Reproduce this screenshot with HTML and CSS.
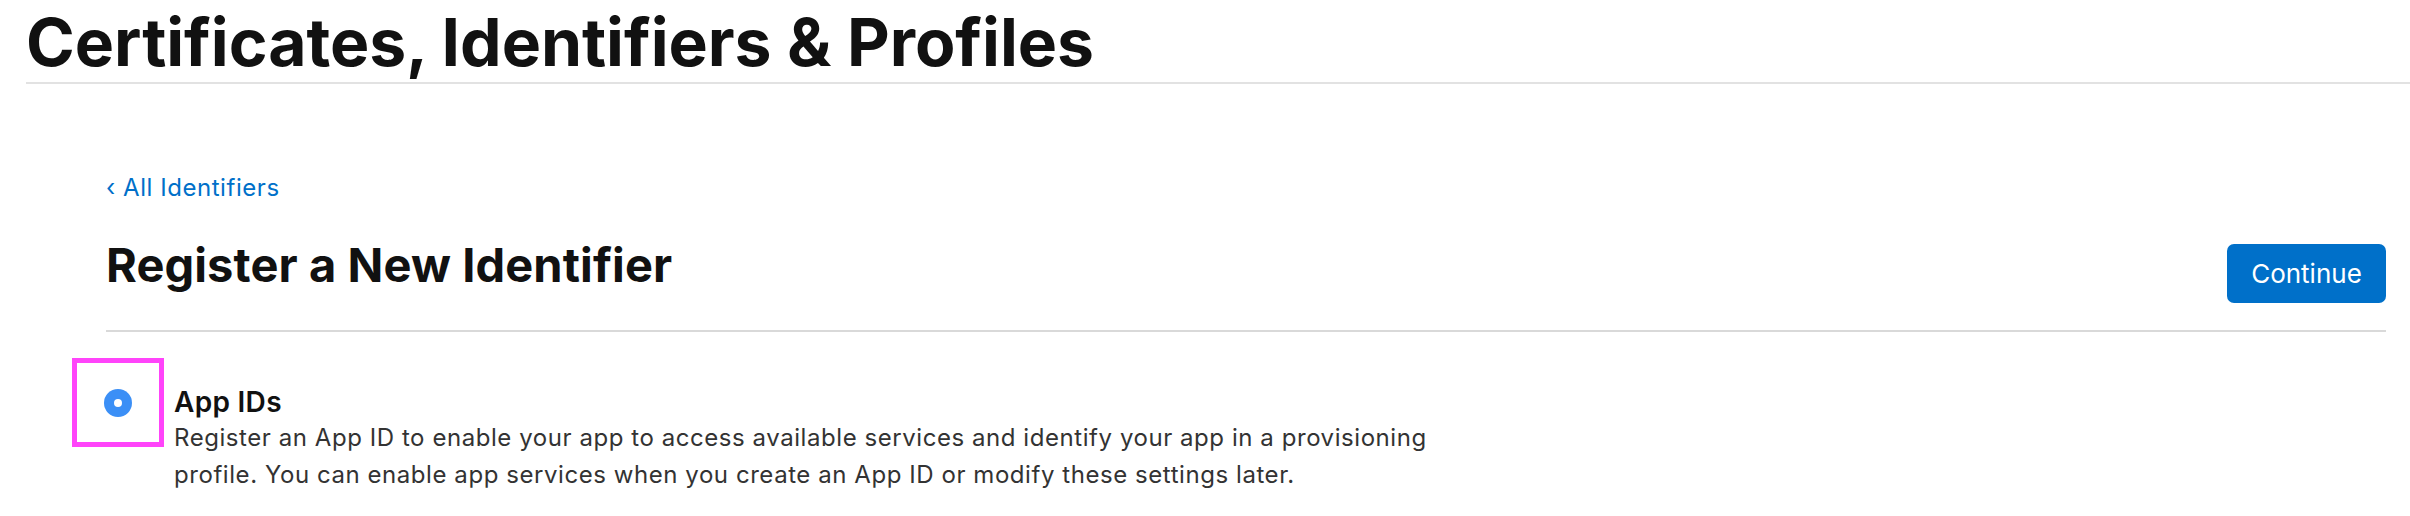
FILE: index.html
```html
<!DOCTYPE html>
<html lang="en">
<head>
<meta charset="utf-8">
<title>Certificates, Identifiers &amp; Profiles</title>
<link rel="stylesheet" href="styles.css">
</head>
<body>
<header class="top">
  <h1 class="top-title">Certificates, Identifiers &amp; Profiles</h1>
</header>
<main class="content">
  <a class="back" href="#">&lsaquo; All Identifiers</a>
  <div class="head-row">
    <h2 class="head-title">Register a New Identifier</h2>
    <button class="btn" type="button">Continue</button>
  </div>
  <div class="option">
    <span class="highlight"><span class="radio"></span></span>
    <div class="opt-text">
      <div class="opt-title">App IDs</div>
      <p class="opt-desc">Register an App ID to enable your app to access available services and identify your app in a provisioning profile. You can enable app services when you create an App ID or modify these settings later.</p>
    </div>
  </div>
</main>
</body>
</html>
```

FILE: styles.css
```css
html, body {
  margin: 0;
  padding: 0;
  background: #ffffff;
}
body {
  font-family: Inter, "Noto Sans", "Liberation Sans", sans-serif;
  color: #111111;
}
.top {
  margin-left: 26px;
  padding-top: 3px;
  border-bottom: 2px solid #e2e2e2;
}
.top-title {
  margin: 0;
  font-size: 66px;
  line-height: 79px;
  font-weight: 700;
  letter-spacing: -0.05px;
  color: #111111;
}
.content {
  padding: 89px 24px 0 106px;
}
.back {
  display: block;
  font-size: 24px;
  line-height: 30px;
  letter-spacing: 0.55px;
  color: #0070c9;
  text-decoration: none;
}
.head-row {
  display: flex;
  justify-content: space-between;
  align-items: flex-start;
  margin-top: 34px;
  padding-bottom: 27px;
  border-bottom: 2px solid #d9d9d9;
}
.head-title {
  margin: 0;
  font-size: 47px;
  line-height: 56px;
  font-weight: 700;
  letter-spacing: 0.1px;
  color: #111111;
}
.btn {
  margin-top: 7px;
  width: 159px;
  height: 59px;
  border: 0;
  border-radius: 7px;
  background: #0070c9;
  color: #ffffff;
  font-family: inherit;
  font-size: 26px;
  padding: 0;
}
.option {
  display: flex;
  align-items: flex-start;
  gap: 10px;
  margin-left: -34px;
  margin-top: 26px;
}
.highlight {
  box-sizing: border-box;
  width: 92px;
  height: 89px;
  border: 5px solid #ff44fa;
  display: flex;
  align-items: center;
  justify-content: center;
  flex: none;
}
.radio {
  box-sizing: border-box;
  width: 28px;
  height: 28px;
  border-radius: 50%;
  background: #3b8ff6;
  display: flex;
  align-items: center;
  justify-content: center;
}
.radio::after {
  content: "";
  width: 8px;
  height: 8px;
  border-radius: 50%;
  background: #ffffff;
}
.opt-text {
  margin-top: 27px;
}
.opt-title {
  font-size: 28px;
  line-height: 34px;
  font-weight: 600;
  letter-spacing: 0.3px;
  color: #111111;
}
.opt-desc {
  margin: 0;
  max-width: 1280px;
  font-size: 24px;
  line-height: 37px;
  letter-spacing: 0.56px;
  color: #333333;
}
```
